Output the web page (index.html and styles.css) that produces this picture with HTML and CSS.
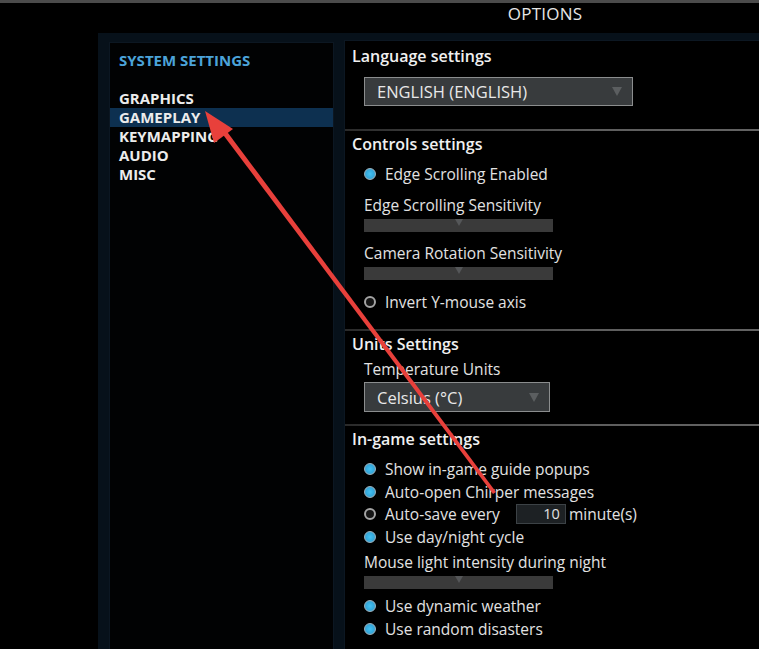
FILE: index.html
```html
<!DOCTYPE html>
<html>
  <head>
    <meta charset="utf-8">
    <title>Options</title>
    <link rel="stylesheet" href="styles.css">
  </head>
  <body>
    <div class="screen">
      <div class="topbar"></div>

      <div class="frame">
        <div class="title">OPTIONS</div>
        <div class="panels">
          <div class="side">
            <div class="side-title">SYSTEM SETTINGS</div>
            <ul class="menu">
              <li>GRAPHICS</li>
              <li class="active">GAMEPLAY</li>
              <li>KEYMAPPING</li>
              <li>AUDIO</li>
              <li>MISC</li>
            </ul>
          </div>

          <div class="content">
            <h3 class="head first">Language settings</h3>
            <div class="dropdown lang">
              <span>ENGLISH (ENGLISH)</span>
              <i class="tri"></i>
            </div>

            <div class="sep"></div>
            <h3 class="head">Controls settings</h3>
            <div class="check on c1">Edge Scrolling Enabled</div>
            <div class="label l1">Edge Scrolling Sensitivity</div>
            <div class="slider"><i class="tri"></i></div>
            <div class="label l2">Camera Rotation Sensitivity</div>
            <div class="slider"><i class="tri"></i></div>
            <div class="check c2">Invert Y-mouse axis</div>

            <div class="sep s2"></div>
            <h3 class="head">Units Settings</h3>
            <div class="label l3">Temperature Units</div>
            <div class="dropdown temp">
              <span>Celsius (°C)</span>
              <i class="tri"></i>
            </div>

            <div class="sep s3"></div>
            <h3 class="head">In-game settings</h3>
            <div class="check on c1">Show in-game guide popups</div>
            <div class="check on">Auto-open Chirper messages</div>
            <div class="check">Auto-save every <span class="num">10</span> minute(s)</div>
            <div class="check on">Use day/night cycle</div>
            <div class="label l4">Mouse light intensity during night</div>
            <div class="slider"><i class="tri"></i></div>
            <div class="check on c3">Use dynamic weather</div>
            <div class="check on">Use random disasters</div>
            <div class="label l5">Random disasters frequency</div>
          </div>
        </div>
      </div>

      <svg class="arrow" width="759" height="649" viewBox="0 0 759 649">
        <polygon points="221,132 225,129 496,492 493,494" fill="#e8403b"/>
        <polygon points="205,111 233,129 214,143" fill="#e8403b"/>
      </svg>
    </div>
  </body>
</html>
```

FILE: styles.css
```css
html, body {
  margin: 0;
  padding: 0;
  background: #000;
}

body {
  font-family: "Open Sans", "Liberation Sans", sans-serif;
  color: #e4e4e4;
}

.screen {
  position: relative;
  width: 759px;
  height: 649px;
  overflow: hidden;
  background: #000;
}

.topbar {
  height: 3px;
  background: #4b4b4b;
}

.frame {
  margin-left: 98px;
  width: 894px;
}

.title {
  height: 30px;
  line-height: 22px;
  text-align: center;
  font-size: 17px;
  letter-spacing: 0.2px;
  color: #e6e6e6;
}

.panels {
  display: flex;
  gap: 12px;
  padding: 8px 12px 0 12px;
  height: 640px;
  background: #07111a;
}

.side {
  width: 223px;
  margin-top: 2px;
  background: #010203;
  box-shadow: 0 0 0 1px #0c1722;
}

.side-title {
  margin-top: 7px;
  padding-left: 9px;
  height: 20px;
  line-height: 20px;
  font-size: 15px;
  font-weight: 700;
  color: #4ba3d9;
}

.menu {
  list-style: none;
  margin: 19px 0 0 0;
  padding: 0;
}

.menu li {
  height: 19px;
  line-height: 19px;
  padding-left: 9px;
  font-size: 15px;
  font-weight: 700;
  color: #ececec;
}

.menu li.active {
  background: #0d3050;
}

.content {
  flex: 1;
  padding-left: 7px;
  background: #000;
  box-shadow: 0 0 0 1px #0c1722;
}

.head {
  margin: 3px 0 0 0;
  height: 20px;
  line-height: 20px;
  font-size: 16px;
  font-weight: 600;
  color: #f0f0f0;
}

.head.first {
  margin-top: 5px;
}

.dropdown {
  display: flex;
  align-items: center;
  justify-content: space-between;
  box-sizing: border-box;
  margin-left: 12px;
  padding: 0 10px 0 12px;
  background: #383b3d;
  border: 1px solid #8b8d8e;
  font-size: 16.5px;
  color: #e8e8e8;
}

.dropdown.lang {
  width: 269px;
  height: 29px;
  margin-top: 11px;
}

.dropdown.temp {
  width: 186px;
  height: 30px;
  margin-top: 3px;
}

.tri {
  display: block;
  width: 0;
  height: 0;
  border-left: 5px solid transparent;
  border-right: 5px solid transparent;
  border-top: 9px solid #5b5e60;
}

.sep {
  margin: 23px 0 0 -7px;
  height: 2px;
  background: linear-gradient(to right, #2a2a2a, #5e5e5e 40%, #6a6a6a);
}

.sep.s2 {
  margin-top: 16px;
}

.sep.s3 {
  margin-top: 12px;
}

.label {
  margin-left: 12px;
  height: 20px;
  line-height: 20px;
  font-size: 15.5px;
  font-weight: 500;
  color: #e2e2e2;
}

.label.l1 {
  margin-top: 9px;
}

.label.l2 {
  margin-top: 11px;
}

.label.l3 {
  margin-top: 5px;
}

.label.l4 {
  margin-top: 4px;
}

.label.l5 {
  margin-top: 5px;
}

.slider {
  display: flex;
  justify-content: center;
  margin: 4px 0 0 12px;
  width: 189px;
  height: 13px;
  background: #3a3a3a;
}

.slider .tri {
  border-left-width: 4px;
  border-right-width: 4px;
  border-top: 7px solid #555759;
}

.check {
  display: flex;
  align-items: center;
  margin-left: 12px;
  height: 22.5px;
  font-size: 15.5px;
  font-weight: 500;
  color: #e2e2e2;
}

.check::before {
  content: "";
  box-sizing: border-box;
  width: 12px;
  height: 12px;
  margin-right: 9px;
  border-radius: 50%;
  border: 2px solid #a4a4a4;
  background: #151515;
  flex: none;
}

.check.on::before {
  border: 1px solid #9ab4c2;
  background: radial-gradient(circle at 50% 50%, #45c1f2 0, #34a9dc 55%, #5b95b2 100%);
}

.check.c1 {
  margin-top: 9px;
}

.check.c2 {
  margin-top: 11px;
}

.check.c3 {
  margin-top: 6px;
}

.num {
  display: inline-block;
  box-sizing: border-box;
  width: 50px;
  height: 20px;
  line-height: 18px;
  margin: 0 3px 0 16px;
  padding-right: 5px;
  text-align: right;
  background: #1d2124;
  border: 1px solid #3c4246;
  font-size: 14.5px;
}

.arrow {
  position: absolute;
  left: 0;
  top: 0;
  pointer-events: none;
}
```
